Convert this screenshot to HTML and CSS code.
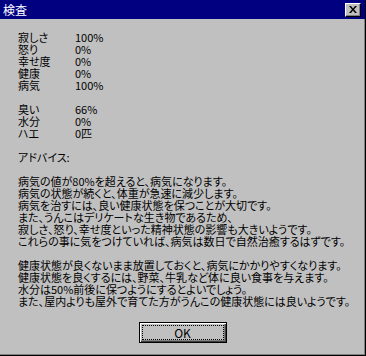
FILE: index.html
```html
<!DOCTYPE html>
<html lang="ja">
<head>
  <meta charset="UTF-8" />
  <title>検査</title>
  <link rel="stylesheet" href="styles.css">
</head>
<body>
  <div class="dialog">
    <div class="titlebar">
      <span class="title">検査</span>
      <span class="close">
        <svg width="8" height="7" viewBox="0 0 8 7"><path d="M0 0h2l2 2.5L6 0h2L5 3.5 8 7H6L4 4.5 2 7H0l3-3.5z" fill="#000"/></svg>
      </span>
    </div>

    <div class="content">
      <div class="stats">
        <div class="row"><span class="label">寂しさ</span><span>100%</span></div>
        <div class="row"><span class="label">怒り</span><span>0%</span></div>
        <div class="row"><span class="label">幸せ度</span><span>0%</span></div>
        <div class="row"><span class="label">健康</span><span>0%</span></div>
        <div class="row"><span class="label">病気</span><span>100%</span></div>
      </div>

      <div class="stats">
        <div class="row"><span class="label">臭い</span><span>66%</span></div>
        <div class="row"><span class="label">水分</span><span>0%</span></div>
        <div class="row"><span class="label">ハエ</span><span>0匹</span></div>
      </div>

      <p>アドバイス:</p>

      <p>
        病気の値が80%を超えると、病気になります。<br>
        病気の状態が続くと、体重が急速に減少します。<br>
        病気を治すには、良い健康状態を保つことが大切です。<br>
        また、うんこはデリケートな生き物であるため、<br>
        寂しさ、怒り、幸せ度といった精神状態の影響も大きいようです。<br>
        これらの事に気をつけていれば、病気は数日で自然治癒するはずです。
      </p>

      <p>
        健康状態が良くないまま放置しておくと、病気にかかりやすくなります。<br>
        健康状態を良くするには、野菜、牛乳など体に良い食事を与えます。<br>
        水分は50%前後に保つようにするとよいでしょう。<br>
        また、屋内よりも屋外で育てた方がうんこの健康状態には良いようです。
      </p>
    </div>

    <div class="buttons">
      <button class="ok"><span class="focus">OK</span></button>
    </div>
  </div>
</body>
</html>
```

FILE: styles.css
```css
body { margin: 0; background: #c0c0c0; font-family: "Noto Sans CJK JP", "Liberation Sans", sans-serif; font-size: 11px; line-height: 12px; color: #000; }
.dialog { width: 366px; height: 356px; box-sizing: border-box; background: #c0c0c0; border-right: 1px solid #000; border-bottom: 1px solid #000; box-shadow: inset -1px -1px 0 #808080; overflow: hidden; }
.titlebar { height: 19px; background: #000080; display: flex; align-items: center; justify-content: space-between; padding: 0 4px 0 3px; }
.title { color: #fff; font-size: 12px; line-height: 12px; }
.close { width: 16px; height: 14px; box-sizing: border-box; background: #c0c0c0; border-top: 1px solid #fff; border-left: 1px solid #fff; border-right: 1px solid #000; border-bottom: 1px solid #000; box-shadow: inset -1px -1px 0 #808080; display: flex; align-items: center; justify-content: center; padding: 0 1px 1px 0; }
.close svg { display: block; }
.content { padding: 12px 0 0 18px; font-feature-settings: "palt"; white-space: nowrap; }
.stats { margin-bottom: 12px; }
.row { display: flex; }
.label { width: 57px; }
p { margin: 0 0 12px 0; }
.buttons { display: flex; justify-content: center; margin-top: 15px; }
.ok { width: 88px; height: 21px; padding: 2px; background: #c0c0c0; border: 1px solid #000; box-shadow: inset 1px 1px 0 #fff, inset -1px -1px 0 #404040, inset -2px -2px 0 #808080; font-family: "Noto Sans CJK JP", "Liberation Sans", sans-serif; font-size: 12px; color: #000; }
.focus { display: block; height: 100%; box-sizing: border-box; border: 1px dotted #000; line-height: 13px; }
```
